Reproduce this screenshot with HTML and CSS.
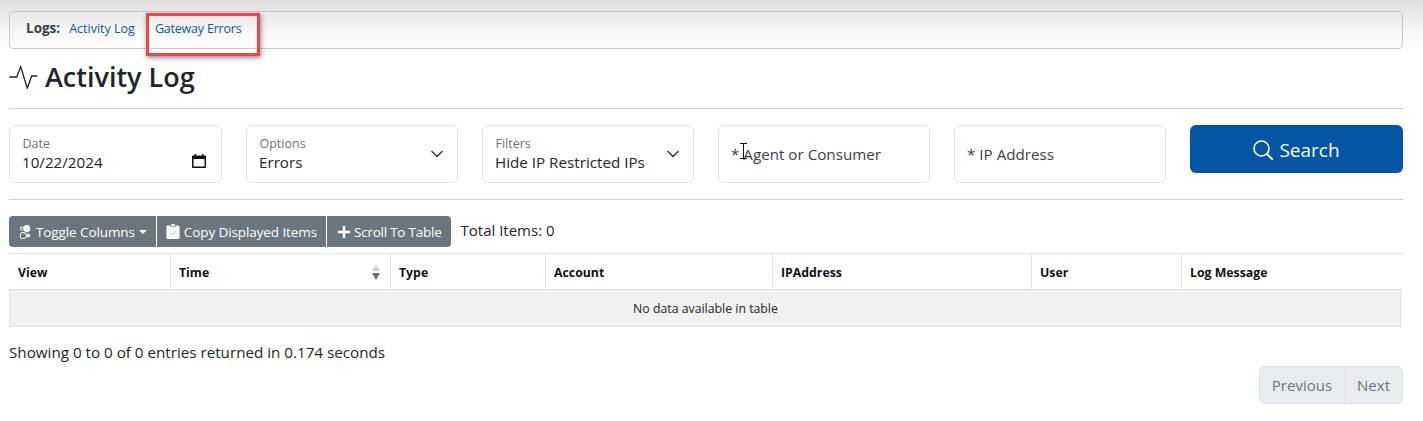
FILE: index.html
```html
<!DOCTYPE html>
<html lang="en">
<head>
<meta charset="utf-8">
<title>Activity Log</title>
<link rel="stylesheet" href="styles.css">
</head>
<body>
<div class="page">
  <nav class="logbar">
    <strong class="logbar-label">Logs:</strong>
    <a class="logbar-link" href="#">Activity Log</a>
    <a class="logbar-link logbar-gap" href="#">Gateway Errors</a>
    <span class="highlight"></span>
  </nav>
  <h1 class="title">
    <svg class="title-icon" viewBox="0 0 29 24" width="29" height="24" fill="none" stroke="#212529" stroke-width="1.300"><path d="M.3 12H7.700L11.700 1.700L18.300 23.300L22.700 11H28.300"/></svg>
    Activity Log
  </h1>
  <hr class="rule rule-title">
  <form class="filters">
    <div class="field"><span class="field-label">Date</span><span class="field-value">10/22/2024</span>
      <svg class="cal" viewBox="0 0 14 14" width="14" height="14"><path fill="#111" fill-rule="evenodd" d="M2.500 0h1.500v1.500h6V0h1.500v1.500H13a1 1 0 0 1 1 1V13a1 1 0 0 1-1 1H1a1 1 0 0 1-1-1V2.500a1 1 0 0 1 1-1h1.500zM1.500 5v7.500h11V5z"/></svg>
    </div>
    <div class="field"><span class="field-label">Options</span><span class="field-value">Errors</span>
      <svg class="chev" viewBox="0 0 12 12" width="12" height="12" fill="none" stroke="#343a40" stroke-width="1.500" stroke-linecap="round" stroke-linejoin="round"><path d="M1 3.500L6 8.500l5-5"/></svg>
    </div>
    <div class="field"><span class="field-label">Filters</span><span class="field-value">Hide IP Restricted IPs</span>
      <svg class="chev" viewBox="0 0 12 12" width="12" height="12" fill="none" stroke="#343a40" stroke-width="1.500" stroke-linecap="round" stroke-linejoin="round"><path d="M1 3.500L6 8.500l5-5"/></svg>
    </div>
    <div class="field field-plain"><span class="placeholder">* Agent or Consumer</span>
      <svg class="ibeam" viewBox="0 0 9 16" width="9" height="16" fill="none" stroke="#111" stroke-width="1"><path d="M1 .5H8M4.500.5V15.500M1 15.500H8"/></svg>
    </div>
    <div class="field field-plain"><span class="placeholder">* IP Address</span></div>
    <button class="search" type="button">
      <svg viewBox="0 0 20 20" width="20" height="20" fill="none" stroke="#fff" stroke-width="1.600"><circle cx="8.500" cy="8.500" r="7.500"/><path d="M14 14l5.200 5.200" stroke-linecap="round" stroke-width="2"/></svg>
      Search
    </button>
  </form>
  <hr class="rule rule-filters">
  <div class="toolbar">
    <div class="btn-group">
      <button class="btn" type="button">
        <svg viewBox="0 0 16 16" width="14" height="14" fill="#fff"><path d="M9.465 10H12a2 2 0 1 1 0 4H9.465c.34-.588.535-1.271.535-2 0-.729-.195-1.412-.535-2z"/><path d="M6 15a3 3 0 1 0 0-6 3 3 0 0 0 0 6zm0 1a4 4 0 1 1 0-8 4 4 0 0 1 0 8zm.535-10a3.975 3.975 0 0 1-.409-1H4a1 1 0 0 1 0-2h2.126c.091-.355.23-.69.41-1H4a2 2 0 1 0 0 4h2.535z"/><path d="M14 4a4 4 0 1 1-8 0 4 4 0 0 1 8 0z"/></svg>
        Toggle Columns<span class="caret"></span>
      </button>
      <button class="btn" type="button">
        <svg viewBox="0 0 14 16" width="14" height="15" fill="#fff"><path d="M1.500 1.500H4V3h6V1.500h2.500A1.500 1.500 0 0 1 14 3v11.500a1.500 1.500 0 0 1-1.500 1.500h-11A1.500 1.500 0 0 1 0 14.500V3a1.500 1.500 0 0 1 1.500-1.500z"/><rect x="5" y="0" width="4" height="2.300" rx=".5"/><path d="M4.500 9.500l2 2 3.500-4" fill="none" stroke="#a9adb2" stroke-width="1"/></svg>
        Copy Displayed Items
      </button>
      <button class="btn btn-scroll" type="button">
        <svg viewBox="0 0 12 12" width="12" height="12" fill="#fff"><path d="M4.800 0h2.400v4.800H12v2.400H7.200V12H4.800V7.200H0V4.800h4.800z"/></svg>
        Scroll To Table
      </button>
    </div>
    <span class="total">Total Items: 0</span>
  </div>
  <table class="grid">
    <colgroup>
      <col class="c1"><col class="c2"><col class="c3"><col class="c4"><col class="c5"><col class="c6"><col class="c7">
    </colgroup>
    <thead>
      <tr>
        <th>View</th>
        <th class="sortable">Time
          <svg class="sort" viewBox="0 0 8 16" width="8" height="16"><path fill="#d3d3d3" d="M4 0l4 7H0z"/><path fill="#6c6c6c" d="M0 9h8l-4 7z"/></svg>
        </th>
        <th>Type</th><th>Account</th><th>IPAddress</th><th>User</th><th>Log Message</th>
      </tr>
    </thead>
    <tbody>
      <tr><td class="empty" colspan="7">No data available in table</td></tr>
    </tbody>
  </table>
  <p class="summary">Showing 0 to 0 of 0 entries returned in 0.174 seconds</p>
  <div class="pager">
    <a class="page-btn" href="#">Previous</a>
    <a class="page-btn" href="#">Next</a>
  </div>
</div>
</body>
</html>
```

FILE: styles.css
```css
* { box-sizing: border-box; }
html, body { margin: 0; padding: 0; }
body {
  font-family: "Open Sans", "Noto Sans", "Liberation Sans", sans-serif;
  color: #212529;
  background: linear-gradient(#dedede 0, #f6f6f6 30px, #fff 50px) no-repeat;
  background-size: 100% 50px;
  overflow: hidden;
}
.page { padding: 11px 20px 0 9px; }

.logbar {
  position: relative;
  display: flex;
  align-items: flex-start;
  height: 38px;
  padding: 8px 16px 0;
  border: 1px solid #c9c9c9;
  border-radius: 4px;
  font-size: 12.500px;
  line-height: 17px;
}
.logbar-label { font-size: 13.500px; color: #3a3f44; margin-right: 9px; }
.logbar-link { color: #0b5aa5; text-decoration: none; }
.logbar-gap { margin-left: 20px; letter-spacing: -.2px; }
.highlight {
  position: absolute;
  left: 136px;
  top: 1px;
  width: 114px;
  height: 43px;
  border: 3px solid #f04545;
  box-shadow: 1px 2px 5px rgba(0,0,0,.45);
}

.title {
  display: flex;
  align-items: center;
  gap: 7px;
  height: 43px;
  margin: 8px 0 0;
  padding-bottom: 4px;
  font-size: 27px;
  font-weight: 600;
  line-height: 40px;
  color: #212529;
}
.title-icon { flex: none; }

.rule { border: 0; border-top: 1px solid #cfcfcf; margin: 0; }
.rule-title { margin-top: 8px; }
.rule-filters { margin-top: 16px; }

.filters {
  display: grid;
  grid-template-columns: 213px repeat(4, 212px) 213px;
  gap: 24px;
  margin-top: 16px;
  align-items: start;
}
.field {
  position: relative;
  height: 58px;
  display: flex;
  flex-direction: column;
  padding: 10px 12px 0;
  background: #fff;
  border: 1px solid #e2e3e5;
  border-radius: 6px;
}
.field-label { font-size: 12.500px; line-height: 16px; color: #6d7277; padding-left: .5px; }
.field-value { font-size: 15.200px; line-height: 20px; color: #212529; }
.field-plain { padding-top: 18px; }
.placeholder { font-size: 15.200px; line-height: 20px; color: #3b4046; }
.cal { position: absolute; right: 15px; top: 28px; }
.chev { position: absolute; right: 14px; top: 22px; }
.ibeam { position: absolute; left: 20px; top: 17px; }

.search {
  height: 48px;
  display: flex;
  align-items: center;
  justify-content: center;
  gap: 6px;
  padding: 1px 0 0;
  background: #0455a4;
  border: 0;
  border-radius: 6px;
  color: #fff;
  font: inherit;
  font-size: 19px;
}

.toolbar {
  display: flex;
  align-items: center;
  gap: 10px;
  margin-top: 16px;
}
.btn-group { display: flex; gap: 1px; }
.btn {
  display: flex;
  align-items: center;
  gap: 4px;
  height: 31px;
  padding: 0 9px;
  background: #6c757d;
  border: 0;
  color: #fff;
  font: inherit;
  font-size: 13.500px;
  letter-spacing: -.1px;
}
.btn:first-child { border-radius: 4px 0 0 4px; }
.btn:last-child { border-radius: 0 4px 4px 0; }
.btn-scroll { padding-left: 11px; letter-spacing: -.24px; }
.caret {
  border-top: 4px solid #fff;
  border-left: 4px solid transparent;
  border-right: 4px solid transparent;
}
.total { font-size: 15px; position: relative; top: -2px; }

.grid {
  width: 1394px;
  table-layout: fixed;
  border-collapse: separate;
  border-spacing: 0;
  margin-top: 6px;
  font-size: 12.300px;
}
.c1 { width: 161px; }
.c2 { width: 220px; }
.c3 { width: 155px; }
.c4 { width: 227px; }
.c5 { width: 259px; }
.c6 { width: 150px; }
.grid th {
  position: relative;
  height: 37px;
  padding: 2px 8px 0;
  text-align: left;
  font-weight: 700;
  color: #111;
  border-top: 1px solid #e3e3e3;
  border-bottom: 1px solid #dedede;
  border-left: 1px solid #e3e3e3;
}
.grid th:first-child { border-left: 0; padding-left: 9px; }
.sort { position: absolute; right: 10px; top: 10px; }
.empty {
  height: 37px;
  padding-top: 2px;
  text-align: center;
  background: #f1f1f1;
  background-clip: padding-box;
  border-bottom: 1px solid #e1e1e1;
  border-left: 1px solid #e1e1e1;
  border-right: 2px solid #fff;
  box-shadow: inset -1px 0 0 #e1e1e1;
  color: #212529;
}

.summary { margin: 15px 0 0; font-size: 15.200px; line-height: 20px; }

.pager { display: flex; justify-content: flex-end; margin-top: 4px; }
.page-btn {
  display: flex;
  align-items: center;
  height: 38px;
  padding: 0 12px;
  background: #e9ecef;
  border: 1px solid #dee2e6;
  color: #6c757d;
  font-size: 15px;
  text-decoration: none;
}
.page-btn:first-child { border-radius: 6px 0 0 6px; }
.page-btn + .page-btn { margin-left: -1px; border-radius: 0 6px 6px 0; }
```
